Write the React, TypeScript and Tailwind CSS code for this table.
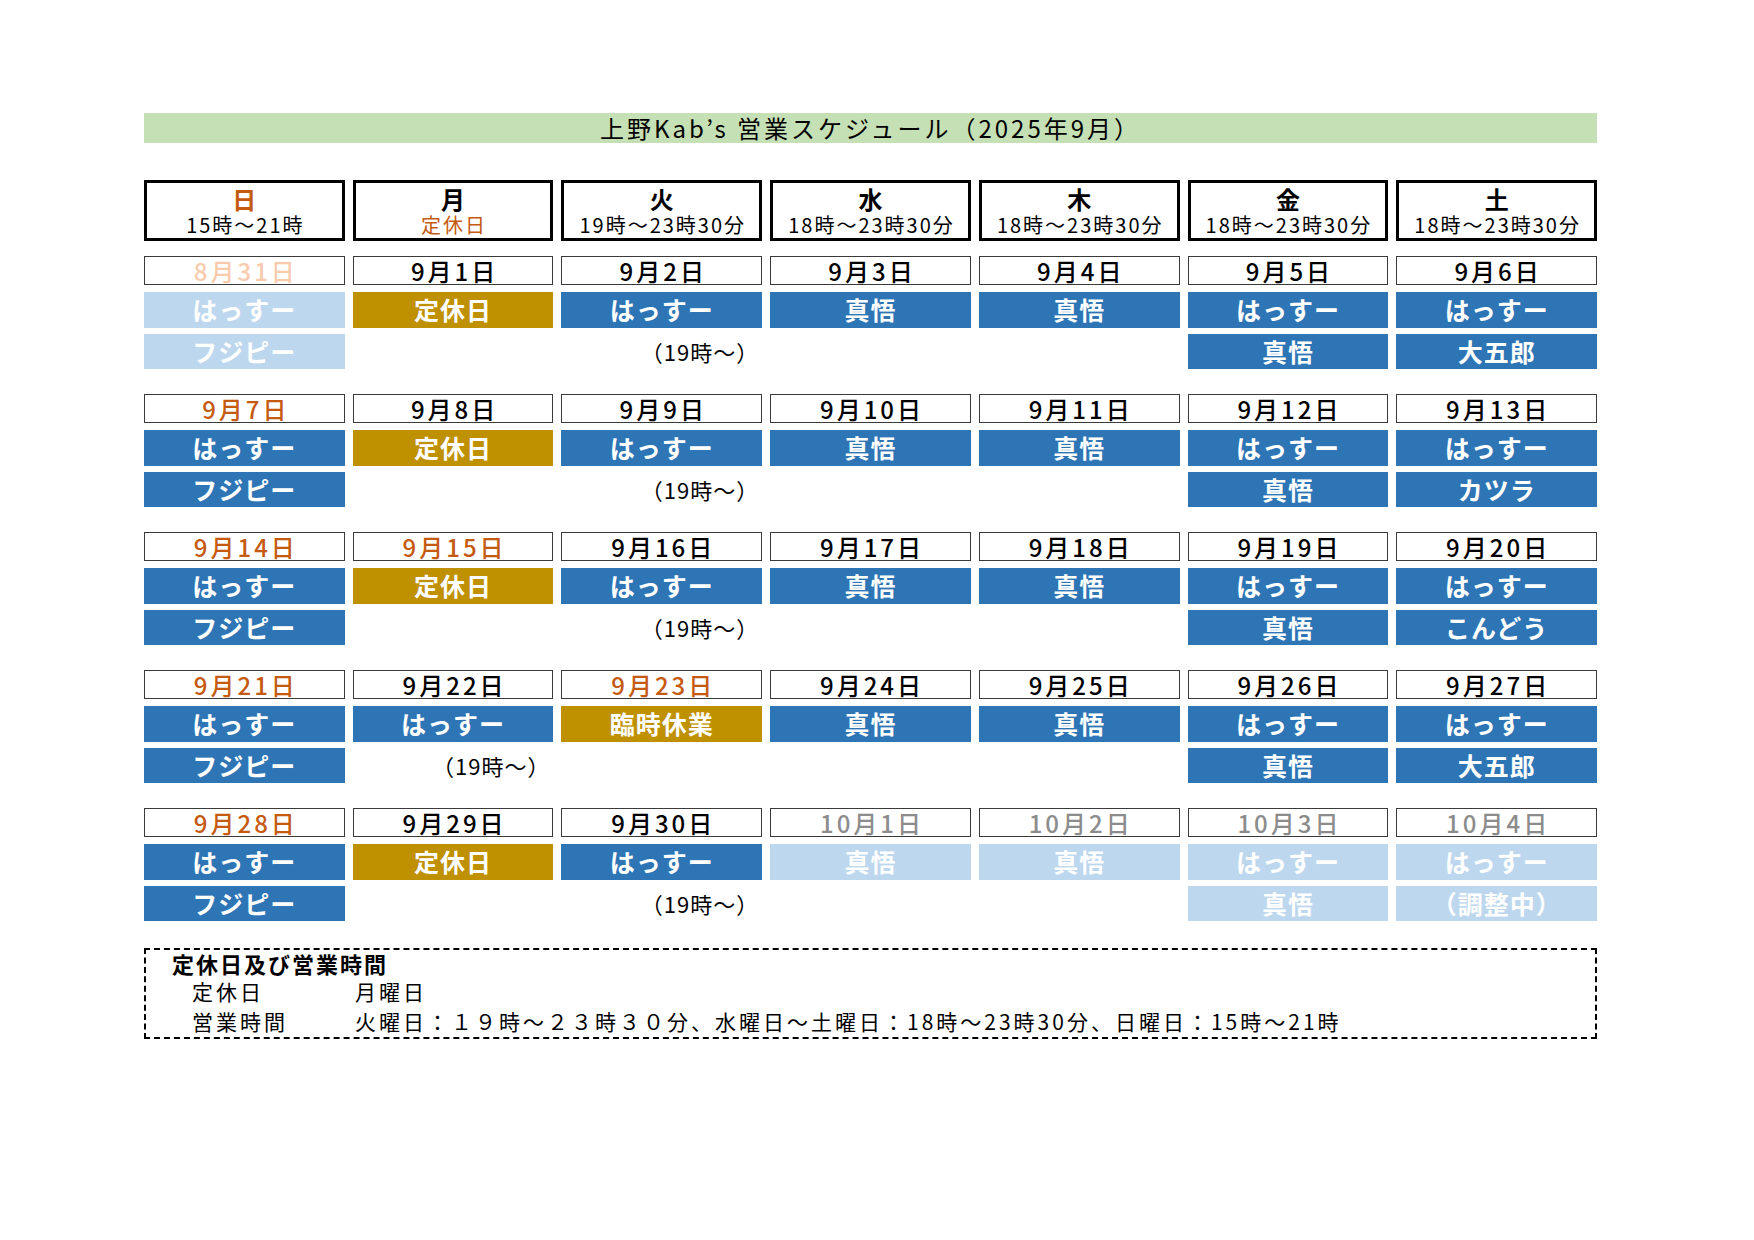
import React from 'react'

// ── Types ────────────────────────────────────────────────────────────────────

type Tone = 'blue' | 'gold' | 'light'
type DateTone = 'normal' | 'sun' | 'faded' | 'gray'

interface Shift {
  name: string
  tone: Tone
}

interface Day {
  date: string
  dateTone?: DateTone
  shifts: Shift[]
  note?: string
}

// ── Data ─────────────────────────────────────────────────────────────────────

const b = (name: string): Shift => ({ name, tone: 'blue' })
const g = (name: string): Shift => ({ name, tone: 'gold' })
const l = (name: string): Shift => ({ name, tone: 'light' })

const HEADERS = [
  { day: '日', hours: '15時〜21時', dayClass: 'text-[#c55a11]', hoursClass: 'text-black' },
  { day: '月', hours: '定休日', dayClass: 'text-black', hoursClass: 'text-[#c55a11]' },
  { day: '火', hours: '19時〜23時30分', dayClass: 'text-black', hoursClass: 'text-black' },
  { day: '水', hours: '18時〜23時30分', dayClass: 'text-black', hoursClass: 'text-black' },
  { day: '木', hours: '18時〜23時30分', dayClass: 'text-black', hoursClass: 'text-black' },
  { day: '金', hours: '18時〜23時30分', dayClass: 'text-black', hoursClass: 'text-black' },
  { day: '土', hours: '18時〜23時30分', dayClass: 'text-black', hoursClass: 'text-black' },
]

const NOTE = '（19時〜）'

const WEEKS: Day[][] = [
  [
    { date: '8月31日', dateTone: 'faded', shifts: [l('はっすー'), l('フジピー')] },
    { date: '9月1日', shifts: [g('定休日')] },
    { date: '9月2日', shifts: [b('はっすー')], note: NOTE },
    { date: '9月3日', shifts: [b('真悟')] },
    { date: '9月4日', shifts: [b('真悟')] },
    { date: '9月5日', shifts: [b('はっすー'), b('真悟')] },
    { date: '9月6日', shifts: [b('はっすー'), b('大五郎')] },
  ],
  [
    { date: '9月7日', dateTone: 'sun', shifts: [b('はっすー'), b('フジピー')] },
    { date: '9月8日', shifts: [g('定休日')] },
    { date: '9月9日', shifts: [b('はっすー')], note: NOTE },
    { date: '9月10日', shifts: [b('真悟')] },
    { date: '9月11日', shifts: [b('真悟')] },
    { date: '9月12日', shifts: [b('はっすー'), b('真悟')] },
    { date: '9月13日', shifts: [b('はっすー'), b('カツラ')] },
  ],
  [
    { date: '9月14日', dateTone: 'sun', shifts: [b('はっすー'), b('フジピー')] },
    { date: '9月15日', dateTone: 'sun', shifts: [g('定休日')] },
    { date: '9月16日', shifts: [b('はっすー')], note: NOTE },
    { date: '9月17日', shifts: [b('真悟')] },
    { date: '9月18日', shifts: [b('真悟')] },
    { date: '9月19日', shifts: [b('はっすー'), b('真悟')] },
    { date: '9月20日', shifts: [b('はっすー'), b('こんどう')] },
  ],
  [
    { date: '9月21日', dateTone: 'sun', shifts: [b('はっすー'), b('フジピー')] },
    { date: '9月22日', shifts: [b('はっすー')], note: NOTE },
    { date: '9月23日', dateTone: 'sun', shifts: [g('臨時休業')] },
    { date: '9月24日', shifts: [b('真悟')] },
    { date: '9月25日', shifts: [b('真悟')] },
    { date: '9月26日', shifts: [b('はっすー'), b('真悟')] },
    { date: '9月27日', shifts: [b('はっすー'), b('大五郎')] },
  ],
  [
    { date: '9月28日', dateTone: 'sun', shifts: [b('はっすー'), b('フジピー')] },
    { date: '9月29日', shifts: [g('定休日')] },
    { date: '9月30日', shifts: [b('はっすー')], note: NOTE },
    { date: '10月1日', dateTone: 'gray', shifts: [l('真悟')] },
    { date: '10月2日', dateTone: 'gray', shifts: [l('真悟')] },
    { date: '10月3日', dateTone: 'gray', shifts: [l('はっすー'), l('真悟')] },
    { date: '10月4日', dateTone: 'gray', shifts: [l('はっすー'), l('（調整中）')] },
  ],
]

const DATE_TONE: Record<DateTone, string> = {
  normal: 'text-black',
  sun: 'text-[#c55a11]',
  faded: 'text-[#f8cbad]',
  gray: 'text-[#8c8c8c]',
}

const SHIFT_TONE: Record<Tone, string> = {
  blue: 'bg-[#2e75b6]',
  gold: 'bg-[#bf9000]',
  light: 'bg-[#bdd7ee]',
}

// ── Pieces ───────────────────────────────────────────────────────────────────

function ShiftBar({ shift, className = '' }: { shift: Shift; className?: string }) {
  return (
    <div
      className={`flex items-center justify-center text-[25px] font-bold tracking-[1px] text-white ${SHIFT_TONE[shift.tone]} ${className}`}
    >
      {shift.name}
    </div>
  )
}

function DayCell({ day }: { day: Day }) {
  const [first, second] = day.shifts
  return (
    <div className="flex flex-col">
      <div
        className={`flex h-[29px] items-center justify-center border border-[#3a3a3a] pl-[3px] text-[24px] font-medium leading-none tracking-[3px] ${DATE_TONE[day.dateTone ?? 'normal']}`}
      >
        {day.date}
      </div>
      {first ? <ShiftBar shift={first} className="mt-[7px] h-[36px]" /> : <div className="mt-[7px] h-[36px]" />}
      {second ? (
        <ShiftBar shift={second} className="mt-[6px] h-[35px]" />
      ) : day.note ? (
        <div className="mt-[6px] flex h-[35px] items-center justify-end pr-[3px] text-[22px] tracking-[1px] text-black">
          {day.note}
        </div>
      ) : (
        <div className="mt-[6px] h-[35px]" />
      )}
    </div>
  )
}

// ── Page ─────────────────────────────────────────────────────────────────────

export default function App() {
  return (
    <div
      className="min-h-[1240px] w-[1754px] bg-white pl-[144px] pt-[113px]"
      style={{ fontFamily: '"Noto Sans CJK JP", "Noto Sans", sans-serif' }}
    >
      <div className="w-[1453px]">
        {/* Title bar */}
        <div className="flex h-[30px] items-center justify-center bg-[#c5e0b4] text-[24px] leading-none tracking-[3px] text-black">
          上野Kab’s 営業スケジュール（2025年9月）
        </div>

        {/* Weekday headers */}
        <div className="mt-[37px] grid grid-cols-7 gap-x-[8px]">
          {HEADERS.map((h) => (
            <div
              key={h.day}
              className="flex h-[61px] flex-col items-center justify-center border-[3px] border-black"
            >
              <span className={`text-[24px] font-bold leading-[28px] ${h.dayClass}`}>{h.day}</span>
              <span className={`pl-[2px] text-[20px] leading-[24px] tracking-[2px] ${h.hoursClass}`}>{h.hours}</span>
            </div>
          ))}
        </div>

        {/* Weeks */}
        <div className="mt-[15px] flex flex-col gap-y-[25px]">
          {WEEKS.map((week, i) => (
            <div key={i} className="grid grid-cols-7 gap-x-[8px]">
              {week.map((day) => (
                <DayCell key={day.date} day={day} />
              ))}
            </div>
          ))}
        </div>

        {/* Notes */}
        <div className="mt-[27px] flex h-[91px] flex-col border-2 border-dashed border-black pl-[26px] text-black">
          <p className="text-[22px] font-bold leading-[26px] tracking-[2px]">定休日及び営業時間</p>
          <div className="flex pl-[20px] text-[21px] leading-[30px] tracking-[3px]">
            <span className="w-[163px]">定休日</span>
            <span>月曜日</span>
          </div>
          <div className="flex pl-[20px] text-[21px] leading-[30px] tracking-[3px]">
            <span className="w-[163px]">営業時間</span>
            <span>火曜日：１９時〜２３時３０分、水曜日〜土曜日：18時〜23時30分、日曜日：15時〜21時</span>
          </div>
        </div>
      </div>
    </div>
  )
}
